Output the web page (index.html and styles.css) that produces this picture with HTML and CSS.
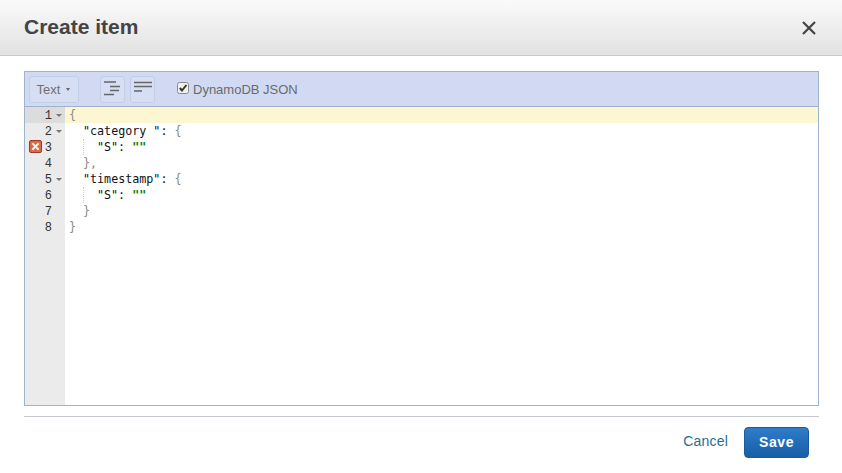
FILE: index.html
```html
<!DOCTYPE html>
<html lang="en">
<head>
<meta charset="utf-8">
<title>Create item</title>
<link rel="stylesheet" href="styles.css">
</head>
<body>
<div class="dialog">
  <header class="head">
    <h1 class="title">Create item</h1>
    <svg class="close" width="14" height="14" viewBox="0 0 14 14"><path d="M1 1L13 13M13 1L1 13" stroke="#444" stroke-width="2.2" fill="none"/></svg>
  </header>
  <main class="body">
    <section class="editor">
      <div class="toolbar">
        <div class="btn mode">Text <span class="caret"></span></div>
        <div class="btn icon">
          <svg width="17" height="15" viewBox="0 0 17 15"><path d="M0 1H12M6 5.5H16M6 9.5H15M0 13.5H10" stroke="#666" stroke-width="1.6" fill="none"/></svg>
        </div>
        <div class="btn icon">
          <svg width="18" height="15" viewBox="0 0 18 15"><path d="M0 1.5H18M0 5.5H18M0 10H8" stroke="#666" stroke-width="1.6" fill="none"/></svg>
        </div>
        <label class="check">
          <svg class="box" width="12" height="12" viewBox="0 0 12 12"><rect x=".5" y=".5" width="11" height="11" rx="2" fill="#f0f0f0" stroke="#8a8a8a"/><path d="M2.8 6L5 8.5L9.4 3" stroke="#333" stroke-width="2" fill="none"/></svg>
          DynamoDB JSON
        </label>
      </div>
      <div class="code">
        <div class="gutter">
          <div class="gl active">1<span class="fold"></span></div>
          <div class="gl">2<span class="fold"></span></div>
          <div class="gl err"><svg class="errico" width="13" height="13" viewBox="0 0 13 13"><rect x=".5" y=".5" width="12" height="12" rx="1.5" fill="#d9694a" stroke="#9c3a22"/><path d="M3.3 3.3L9.7 9.7M9.7 3.3L3.3 9.7" stroke="#fbeee6" stroke-width="2"/></svg>3<span class="nofold"></span></div>
          <div class="gl">4<span class="nofold"></span></div>
          <div class="gl">5<span class="fold"></span></div>
          <div class="gl">6<span class="nofold"></span></div>
          <div class="gl">7<span class="nofold"></span></div>
          <div class="gl">8<span class="nofold"></span></div>
        </div>
        <div class="lines">
          <div class="ln active"><span class="p">{</span></div>
          <div class="ln"><span class="in"></span>"category ": <span class="p">{</span></div>
          <div class="ln"><span class="in"></span><span class="in"></span>"S": <b class="str">""</b></div>
          <div class="ln"><span class="in"></span><span class="p">},</span></div>
          <div class="ln"><span class="in"></span>"timestamp": <span class="p">{</span></div>
          <div class="ln"><span class="in"></span><span class="in"></span>"S": <b class="str">""</b></div>
          <div class="ln"><span class="in"></span><span class="p">}</span></div>
          <div class="ln"><span class="p">}</span></div>
        </div>
      </div>
    </section>
    <hr class="rule">
    <footer class="foot">
      <a class="cancel">Cancel</a>
      <button class="save">Save</button>
    </footer>
  </main>
</div>
</body>
</html>
```
FILE: styles.css
```css
* { box-sizing: border-box; }
html, body { margin: 0; padding: 0; background: #fff; }
body { width: 842px; height: 473px; overflow: hidden; font-family: "Liberation Sans", Arial, sans-serif; }
.dialog { display: flex; flex-direction: column; height: 473px; }
.head {
  height: 56px;
  display: flex; align-items: center; justify-content: space-between;
  padding: 0 26px 1px 24px;
  background: linear-gradient(#fafafa, #e2e2e2);
  border-bottom: 1px solid #c9c9c9;
}
.title { margin: 0; font-size: 21px; font-weight: 700; color: #444; line-height: 24px; }
.close { margin-top: 1px; }
.body { flex: 1; padding: 15px 23px 0 24px; display: flex; flex-direction: column; }
.editor { height: 335px; border: 1px solid #9db5cc; display: flex; flex-direction: column; }
.toolbar {
  height: 35px; flex: none;
  background: #d1daf2;
  border-bottom: 1px solid #9fb1cd;
  display: flex; align-items: center;
  padding: 0 4px;
}
.btn {
  height: 27px;
  border: 1px solid #c2cde6;
  border-radius: 3px;
  background: #d6def4;
  display: flex; align-items: center; justify-content: center;
}
.mode { width: 50px; font-size: 13px; color: #707070; gap: 6px; margin-right: 21px; padding: 1px 1px 0 0; }
.caret { width: 0; height: 0; border: 2px solid transparent; border-top: 3px solid #666; border-bottom: 0; }
.icon { width: 25px; margin-right: 5px; padding-bottom: 1px; }
.check { display: flex; align-items: center; margin-left: 17px; font-size: 13px; color: #6a6a6a; }
.box { margin: 0 4px 3px 0; }
.code { flex: 1; display: flex; min-height: 0; }
.gutter { width: 40px; flex: none; background: #ebebeb; }
.gl {
  position: relative;
  height: 16px; display: flex; align-items: center; justify-content: flex-end;
  padding-top: 1px;
  font: 12px/16px "Liberation Mono", "Courier New", monospace;
  color: #333;
}
.gl.active { background: #dcdcdc; }
.fold { width: 13px; height: 16px; position: relative; }
.fold::after {
  content: ""; position: absolute; left: 4px; top: 6px;
  border: 3px solid transparent; border-top: 3px solid #777; border-bottom: 0;
}
.nofold { width: 13px; }
.errico { position: absolute; left: 4px; top: 1px; }
.lines { flex: 1; }
.ln {
  height: 16px; padding: 0 0 0 4px;
  font: 11.7px/16px "DejaVu Sans Mono", "Liberation Mono", monospace;
  color: #111;
  white-space: pre;
  display: flex;
}
.ln > * { flex: none; }
.ln.active { background: #fcf7d0; }
.in { width: 14px; border-left: 1px dotted #ccc; height: 16px; }
.ln > .in:first-child { border-left: 0; }
.p { color: #8a8a8a; }
.str { color: #0a7d0a; font-weight: 700; }
.rule { margin: 10px 0 0; border: 0; border-top: 1px solid #c3c9cf; width: 795px; }
.foot { display: flex; justify-content: flex-end; align-items: center; padding: 10px 10px 0 0; gap: 16px; }
.cancel { color: #1f6f93; font-size: 14px; margin-bottom: 3px; letter-spacing: .2px; }
.save {
  width: 65px; height: 31px;
  background: linear-gradient(#2f7cc9, #175ea6);
  border: 1px solid #1a5b9c;
  border-radius: 4px;
  color: #fff;
  font: 700 14px "Liberation Sans", Arial, sans-serif;
  letter-spacing: .6px;
  padding: 0 0 1px;
}
```
